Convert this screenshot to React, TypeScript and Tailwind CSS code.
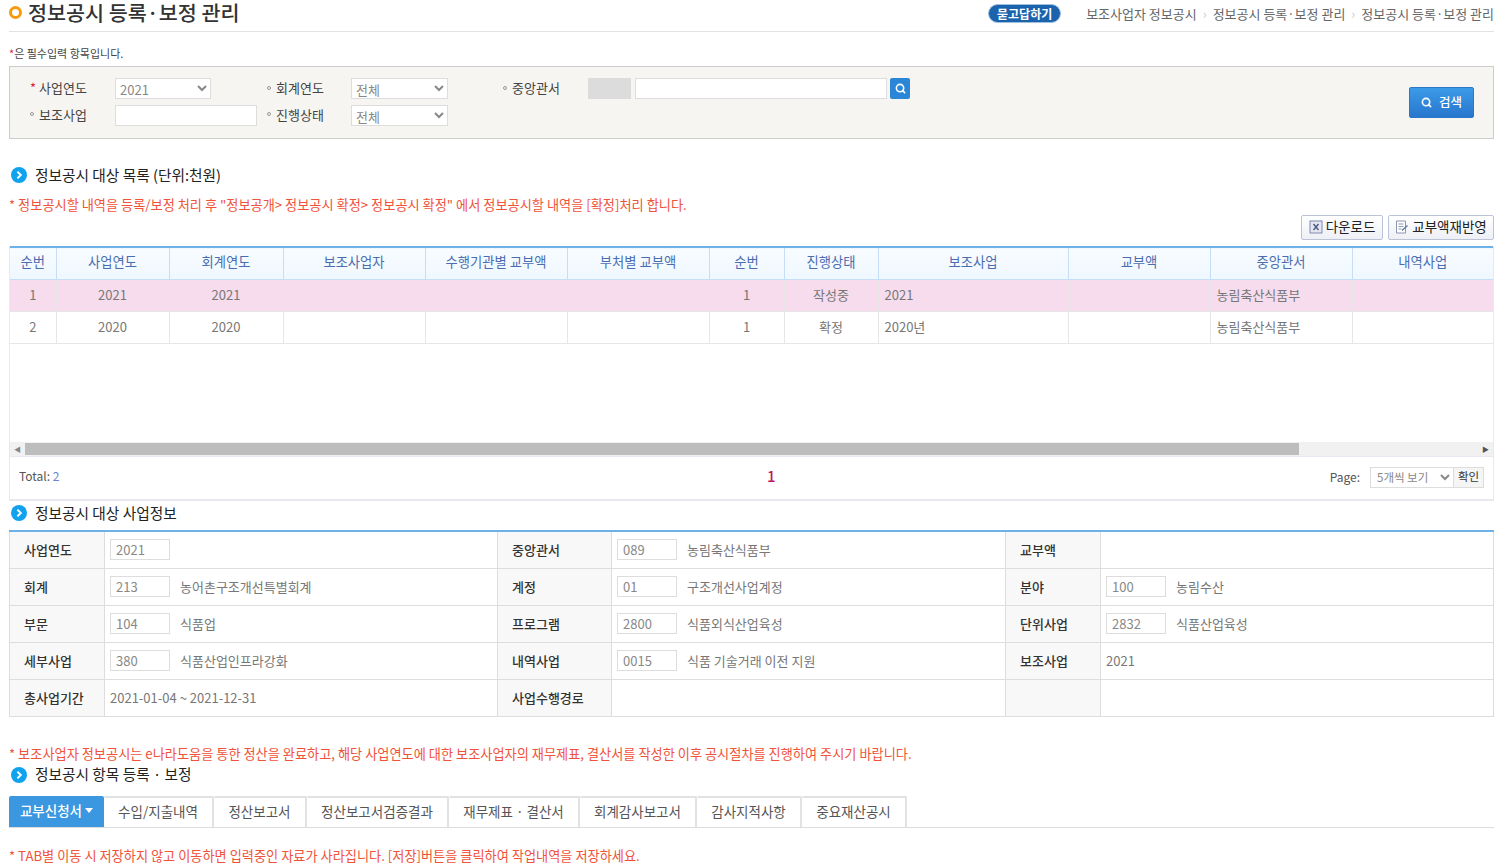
import { Search } from "lucide-react";

const FONT = "font-['Noto_Sans_CJK_KR','Noto_Sans',sans-serif]";

const listHead = ["순번", "사업연도", "회계연도", "보조사업자", "수행기관별 교부액", "부처별 교부액", "순번", "진행상태", "보조사업", "교부액", "중앙관서", "내역사업"];
const listCols = ["w-[46px]", "w-[113px]", "w-[114px]", "w-[142px]", "w-[142px]", "w-[142px]", "w-[75px]", "w-[94px]", "w-[190px]", "w-[142px]", "w-[142px]", "w-[141px]"];
const listRows = [
  { no: "1", year: "2021", acct: "2021", sub: "1", state: "작성중", biz: "2021", dept: "농림축산식품부", pink: true },
  { no: "2", year: "2020", acct: "2020", sub: "1", state: "확정", biz: "2020년", dept: "농림축산식품부", pink: false },
];

const tabs = [
  { label: "수입/지출내역", w: "w-[110px]" },
  { label: "정산보고서", w: "w-[93px]" },
  { label: "정산보고서검증결과", w: "w-[142px]" },
  { label: "재무제표 · 결산서", w: "w-[131px]" },
  { label: "회계감사보고서", w: "w-[117px]" },
  { label: "감사지적사항", w: "w-[105px]" },
  { label: "중요재산공시", w: "w-[105px]" },
];

function Heading({ children }: { children: React.ReactNode }) {
  return (
    <div className="flex h-6 items-center gap-2 pl-[2px] text-[14.7px] text-[#222]">
      <svg width="16" height="16" viewBox="0 0 16 16" className="shrink-0">
        <circle cx="8" cy="8" r="8" fill="#10a2ee" />
        <path d="M6.4 4.6 9.8 8l-3.4 3.4" fill="none" stroke="#fff" strokeWidth="2" />
      </svg>
      <span>{children}</span>
    </div>
  );
}

function Label({ children, star }: { children: React.ReactNode; star?: boolean }) {
  return (
    <span className="flex w-[85px] shrink-0 items-center pb-[2px] text-[13px] text-[#444]">
      {star ? (
        <span className="w-[9px] text-[#e0203c]">*</span>
      ) : (
        <span className="flex w-[9px] items-center">
          <span className="h-[4px] w-[4px] rounded-full border border-[#999]" />
        </span>
      )}
      {children}
    </span>
  );
}

function Pick({ value, w = "w-[96px]" }: { value: string; w?: string }) {
  return (
    <select
      defaultValue={value}
      className={`${w} h-[21px] border border-[#ddd] bg-white text-[13px] text-[#888]`}
    >
      <option>{value}</option>
    </select>
  );
}

function CodeCell({ code, name }: { code?: string; name?: string }) {
  return (
    <td className="border-b border-[#ddd] pl-[5px] text-[13px] text-[#777]">
      <div className="flex items-center gap-[10px]">
        {code && (
          <input
            readOnly
            value={code}
            className="h-[21px] w-[60px] border border-[#ddd] bg-white pl-[5px] text-[13px] text-[#888]"
          />
        )}
        {name && <span>{name}</span>}
      </div>
    </td>
  );
}

function Th({ children }: { children?: React.ReactNode }) {
  return (
    <th className="border-x border-b border-[#ddd] bg-[#f8f8f8] pl-[14px] text-left text-[13px] font-medium text-[#333]">
      {children}
    </th>
  );
}

export default function App() {
  return (
    <div className={`${FONT} h-[864px] w-[1500px] overflow-hidden bg-white pl-[9px] pr-[6px]`}>
      <div className="flex h-[32px] items-start justify-between border-b border-[#e2e2e2]">
        <div className="flex items-center gap-[6px]">
          <span className="h-[13px] w-[13px] rounded-full border-[3.5px] border-[#f59a0c]" />
          <h1 className="text-[20.7px] leading-[24px] font-medium text-[#333]">정보공시 등록·보정 관리</h1>
        </div>
        <div className="flex items-center pt-[4px] text-[13px] leading-[18px] text-[#666]">
          <span className="mr-[25px] flex h-[19px] w-[73px] items-center justify-center rounded-full border border-[#9dbfe0] bg-[#1b63ad] text-[12px] font-bold text-white">
            묻고답하기
          </span>
          <span>보조사업자 정보공시</span>
          <span className="px-[6px] text-[#ccc]">›</span>
          <span>정보공시 등록·보정 관리</span>
          <span className="px-[6px] text-[#ccc]">›</span>
          <span>정보공시 등록·보정 관리</span>
        </div>
      </div>

      <p className="flex h-[34px] items-center pt-[9px] text-[11px] text-[#444]">
        <span className="text-[#e0203c]">*</span>은 필수입력 항목입니다.
      </p>

      <div className="flex h-[73px] items-start border border-[#ccc] bg-[#f6f5f1] pl-[20px] pr-[19px]">
        <div className="flex-1 pt-[11px]">
          <div className="grid grid-cols-[237px_236px_1fr] items-center gap-y-[5px]">
            <div className="flex items-center">
              <Label star>사업연도</Label>
              <Pick value="2021" />
            </div>
            <div className="flex items-center">
              <Label>회계연도</Label>
              <Pick value="전체" w="-ml-px w-[97px]" />
            </div>
            <div className="flex items-center">
              <Label>중앙관서</Label>
              <span className="h-[21px] w-[43px] bg-[#dcdcdc]" />
              <input className="ml-[4px] h-[21px] w-[252px] border border-[#ddd] bg-white" />
              <button className="ml-[3px] flex h-[21px] w-[20px] items-center justify-center rounded-[2px] bg-[#2b86d8]">
                <Search size={11} strokeWidth={3.5} className="text-white" />
              </button>
            </div>
            <div className="flex items-center">
              <Label>보조사업</Label>
              <input className="h-[21px] w-[142px] border border-[#ddd] bg-white" />
            </div>
            <div className="flex items-center">
              <Label>진행상태</Label>
              <Pick value="전체" w="-ml-px w-[97px]" />
            </div>
          </div>
        </div>
        <button className="mt-[20px] flex h-[31px] w-[65px] items-center justify-center gap-[7px] rounded-[2px] border border-[#2a78c8] bg-gradient-to-b from-[#3c9be8] to-[#2876cc] text-[12.5px] font-medium text-white">
          <Search size={11} strokeWidth={3.5} />
          검색
        </button>
      </div>

      <div className="mt-6">
        <Heading>정보공시 대상 목록 (단위:천원)</Heading>
      </div>
      <p className="mt-2 flex h-5 items-center text-[13.2px] text-[#f0523a]">
        * 정보공시할 내역을 등록/보정 처리 후 "정보공개&gt; 정보공시 확정&gt; 정보공시 확정" 에서 정보공시할 내역을 [확정]처리 합니다.
      </p>

      <div className="flex h-[25px] justify-end gap-[5px]">
        <button className="flex w-[82px] items-center justify-center gap-[3px] rounded-[2px] border border-[#bcc3d6] bg-gradient-to-b from-white to-[#eef0f5] pb-[2px] text-[13.5px] text-[#222]">
          <svg width="14" height="14" viewBox="0 0 14 14">
            <rect x="1" y="1" width="12" height="12" fill="#e4e7f2" stroke="#7f88ad" />
            <path d="M4.5 4 9.5 10M9.5 4 4.5 10" stroke="#4d5680" strokeWidth="1.4" />
          </svg>
          다운로드
        </button>
        <button className="flex w-[106px] items-center justify-center gap-[3px] rounded-[2px] border border-[#bcc3d6] bg-gradient-to-b from-white to-[#eef0f5] pb-[2px] text-[13.5px] text-[#222]">
          <svg width="14" height="14" viewBox="0 0 14 14" fill="none">
            <path d="M1.5 1h9v12h-9z" fill="#fff" stroke="#8c94b0" />
            <path d="M3.5 4h5M3.5 6.5h5M3.5 9h3" stroke="#8c94b0" />
            <path d="M7 10.5 12.5 5.5" stroke="#5f78b0" strokeWidth="1.5" />
          </svg>
          교부액재반영
        </button>
      </div>

      <div className="mt-[6px] border-r border-b-2 border-l border-[#e8e8f0]">
        <div className="h-[196px] bg-white">
          <table className="w-full table-fixed border-collapse">
            <colgroup>
              {listCols.map((c, i) => (
                <col key={i} className={c} />
              ))}
            </colgroup>
            <thead>
              <tr className="h-[32px] border-t-2 border-[#6eb1e8] bg-gradient-to-b from-[#f8fcff] to-[#eff7ff]">
                {listHead.map((h, i) => (
                  <th
                    key={i}
                    className={`border-b border-[#c5ddf5] pb-[3px] text-[13.3px] font-normal text-[#4a6db0] ${i > 0 ? "border-l" : ""}`}
                  >
                    {h}
                  </th>
                ))}
              </tr>
            </thead>
            <tbody>
              {listRows.map((r) => (
                <tr key={r.no} className={`h-[32px] text-[13px] text-[#777] ${r.pink ? "bg-[#f6dcec]" : ""}`}>
                  <td className="border-b border-[#e6e6e6] text-center">{r.no}</td>
                  <td className="border-b border-l border-[#e6e6e6] text-center">{r.year}</td>
                  <td className="border-b border-l border-[#e6e6e6] text-center">{r.acct}</td>
                  <td className="border-b border-l border-[#e6e6e6]" />
                  <td className="border-b border-l border-[#e6e6e6]" />
                  <td className="border-b border-l border-[#e6e6e6]" />
                  <td className="border-b border-l border-[#e6e6e6] text-center">{r.sub}</td>
                  <td className="border-b border-l border-[#e6e6e6] text-center">{r.state}</td>
                  <td className="border-b border-l border-[#e6e6e6] pl-[6px]">{r.biz}</td>
                  <td className="border-b border-l border-[#e6e6e6]" />
                  <td className="border-b border-l border-[#e6e6e6] pl-[6px]">{r.dept}</td>
                  <td className="border-b border-l border-[#e6e6e6]" />
                </tr>
              ))}
            </tbody>
          </table>
        </div>
        <div className="flex h-[14px] items-center bg-[#f1f1f1]">
          <span className="flex w-[15px] justify-center text-[7px] text-[#888]">◀</span>
          <span className="h-[12px] w-[1274px] bg-[#bdbdbd]" />
          <span className="flex-1" />
          <span className="flex w-[15px] justify-center text-[7px] text-[#555]">▶</span>
        </div>
        <div className="relative flex h-[43px] items-center justify-between border-t border-[#e8e8f0] pr-[9px] pb-[2px] pl-[9px] text-[12px] text-[#555]">
          <span className="pb-[2px]">
            Total: <span className="text-[#6a83d8]">2</span>
          </span>
          <span className="absolute left-[757px] pb-[2px] text-[15px] font-medium text-[#c2185b]">1</span>
          <div className="flex items-center">
            <span className="mr-[10px]">Page:</span>
            <select defaultValue="5개씩 보기" className="h-[21px] w-[84px] border border-[#ddd] bg-white pl-[2px] text-[11.5px] text-[#888]">
              <option>5개씩 보기</option>
            </select>
            <button className="h-[21px] w-[30px] border border-l-0 border-[#ddd] bg-[#f5f5f5] text-[11.5px] text-[#333]">확인</button>
          </div>
        </div>
      </div>

      <Heading>정보공시 대상 사업정보</Heading>

      <table className="mt-[5px] w-[1484px] table-fixed border-collapse border-t-2 border-r border-l border-t-[#6eb1e8] border-r-[#ddd] border-l-[#ddd]">
        <colgroup>
          <col className="w-[95px]" />
          <col className="w-[393px]" />
          <col className="w-[114px]" />
          <col className="w-[394px]" />
          <col className="w-[95px]" />
          <col className="w-[393px]" />
        </colgroup>
        <tbody>
          <tr className="h-[37px]">
            <Th>사업연도</Th>
            <CodeCell code="2021" />
            <Th>중앙관서</Th>
            <CodeCell code="089" name="농림축산식품부" />
            <Th>교부액</Th>
            <CodeCell />
          </tr>
          <tr className="h-[37px]">
            <Th>회계</Th>
            <CodeCell code="213" name="농어촌구조개선특별회계" />
            <Th>계정</Th>
            <CodeCell code="01" name="구조개선사업계정" />
            <Th>분야</Th>
            <CodeCell code="100" name="농림수산" />
          </tr>
          <tr className="h-[37px]">
            <Th>부문</Th>
            <CodeCell code="104" name="식품업" />
            <Th>프로그램</Th>
            <CodeCell code="2800" name="식품외식산업육성" />
            <Th>단위사업</Th>
            <CodeCell code="2832" name="식품산업육성" />
          </tr>
          <tr className="h-[37px]">
            <Th>세부사업</Th>
            <CodeCell code="380" name="식품산업인프라강화" />
            <Th>내역사업</Th>
            <CodeCell code="0015" name="식품 기술거래 이전 지원" />
            <Th>보조사업</Th>
            <CodeCell name="2021" />
          </tr>
          <tr className="h-[37px]">
            <Th>총사업기간</Th>
            <CodeCell name="2021-01-04 ~ 2021-12-31" />
            <Th>사업수행경로</Th>
            <CodeCell />
            <Th />
            <CodeCell />
          </tr>
        </tbody>
      </table>

      <p className="mt-[28px] flex h-[18px] items-center text-[13.2px] text-[#f0523a]">
        * 보조사업자 정보공시는 e나라도움을 통한 정산을 완료하고, 해당 사업연도에 대한 보조사업자의 재무제표, 결산서를 작성한 이후 공시절차를 진행하여 주시기 바랍니다.
      </p>
      <Heading>정보공시 항목 등록 · 보정</Heading>

      <div className="mt-[9px] flex h-[32px] border-b border-[#ddd]">
        <div className="flex h-[31px] w-[95px] items-center justify-center gap-[3px] rounded-t-[2px] bg-[#3a97e0] pb-[2px] text-[13.5px] font-medium text-white">
          교부신청서
          <span className="border-x-[4px] border-t-[5px] border-x-transparent border-t-white" />
        </div>
        {tabs.map((t) => (
          <div
            key={t.label}
            className={`${t.w} flex h-[31px] items-center justify-center rounded-t-[2px] border-t-2 border-r-2 border-[#e2e2e2] pb-[2px] text-[13.5px] text-[#555]`}
          >
            {t.label}
          </div>
        ))}
      </div>

      <p className="mt-[18px] flex h-5 items-center text-[13.2px] text-[#f0523a]">
        * TAB별 이동 시 저장하지 않고 이동하면 입력중인 자료가 사라집니다. [저장]버튼을 클릭하여 작업내역을 저장하세요.
      </p>
    </div>
  );
}
